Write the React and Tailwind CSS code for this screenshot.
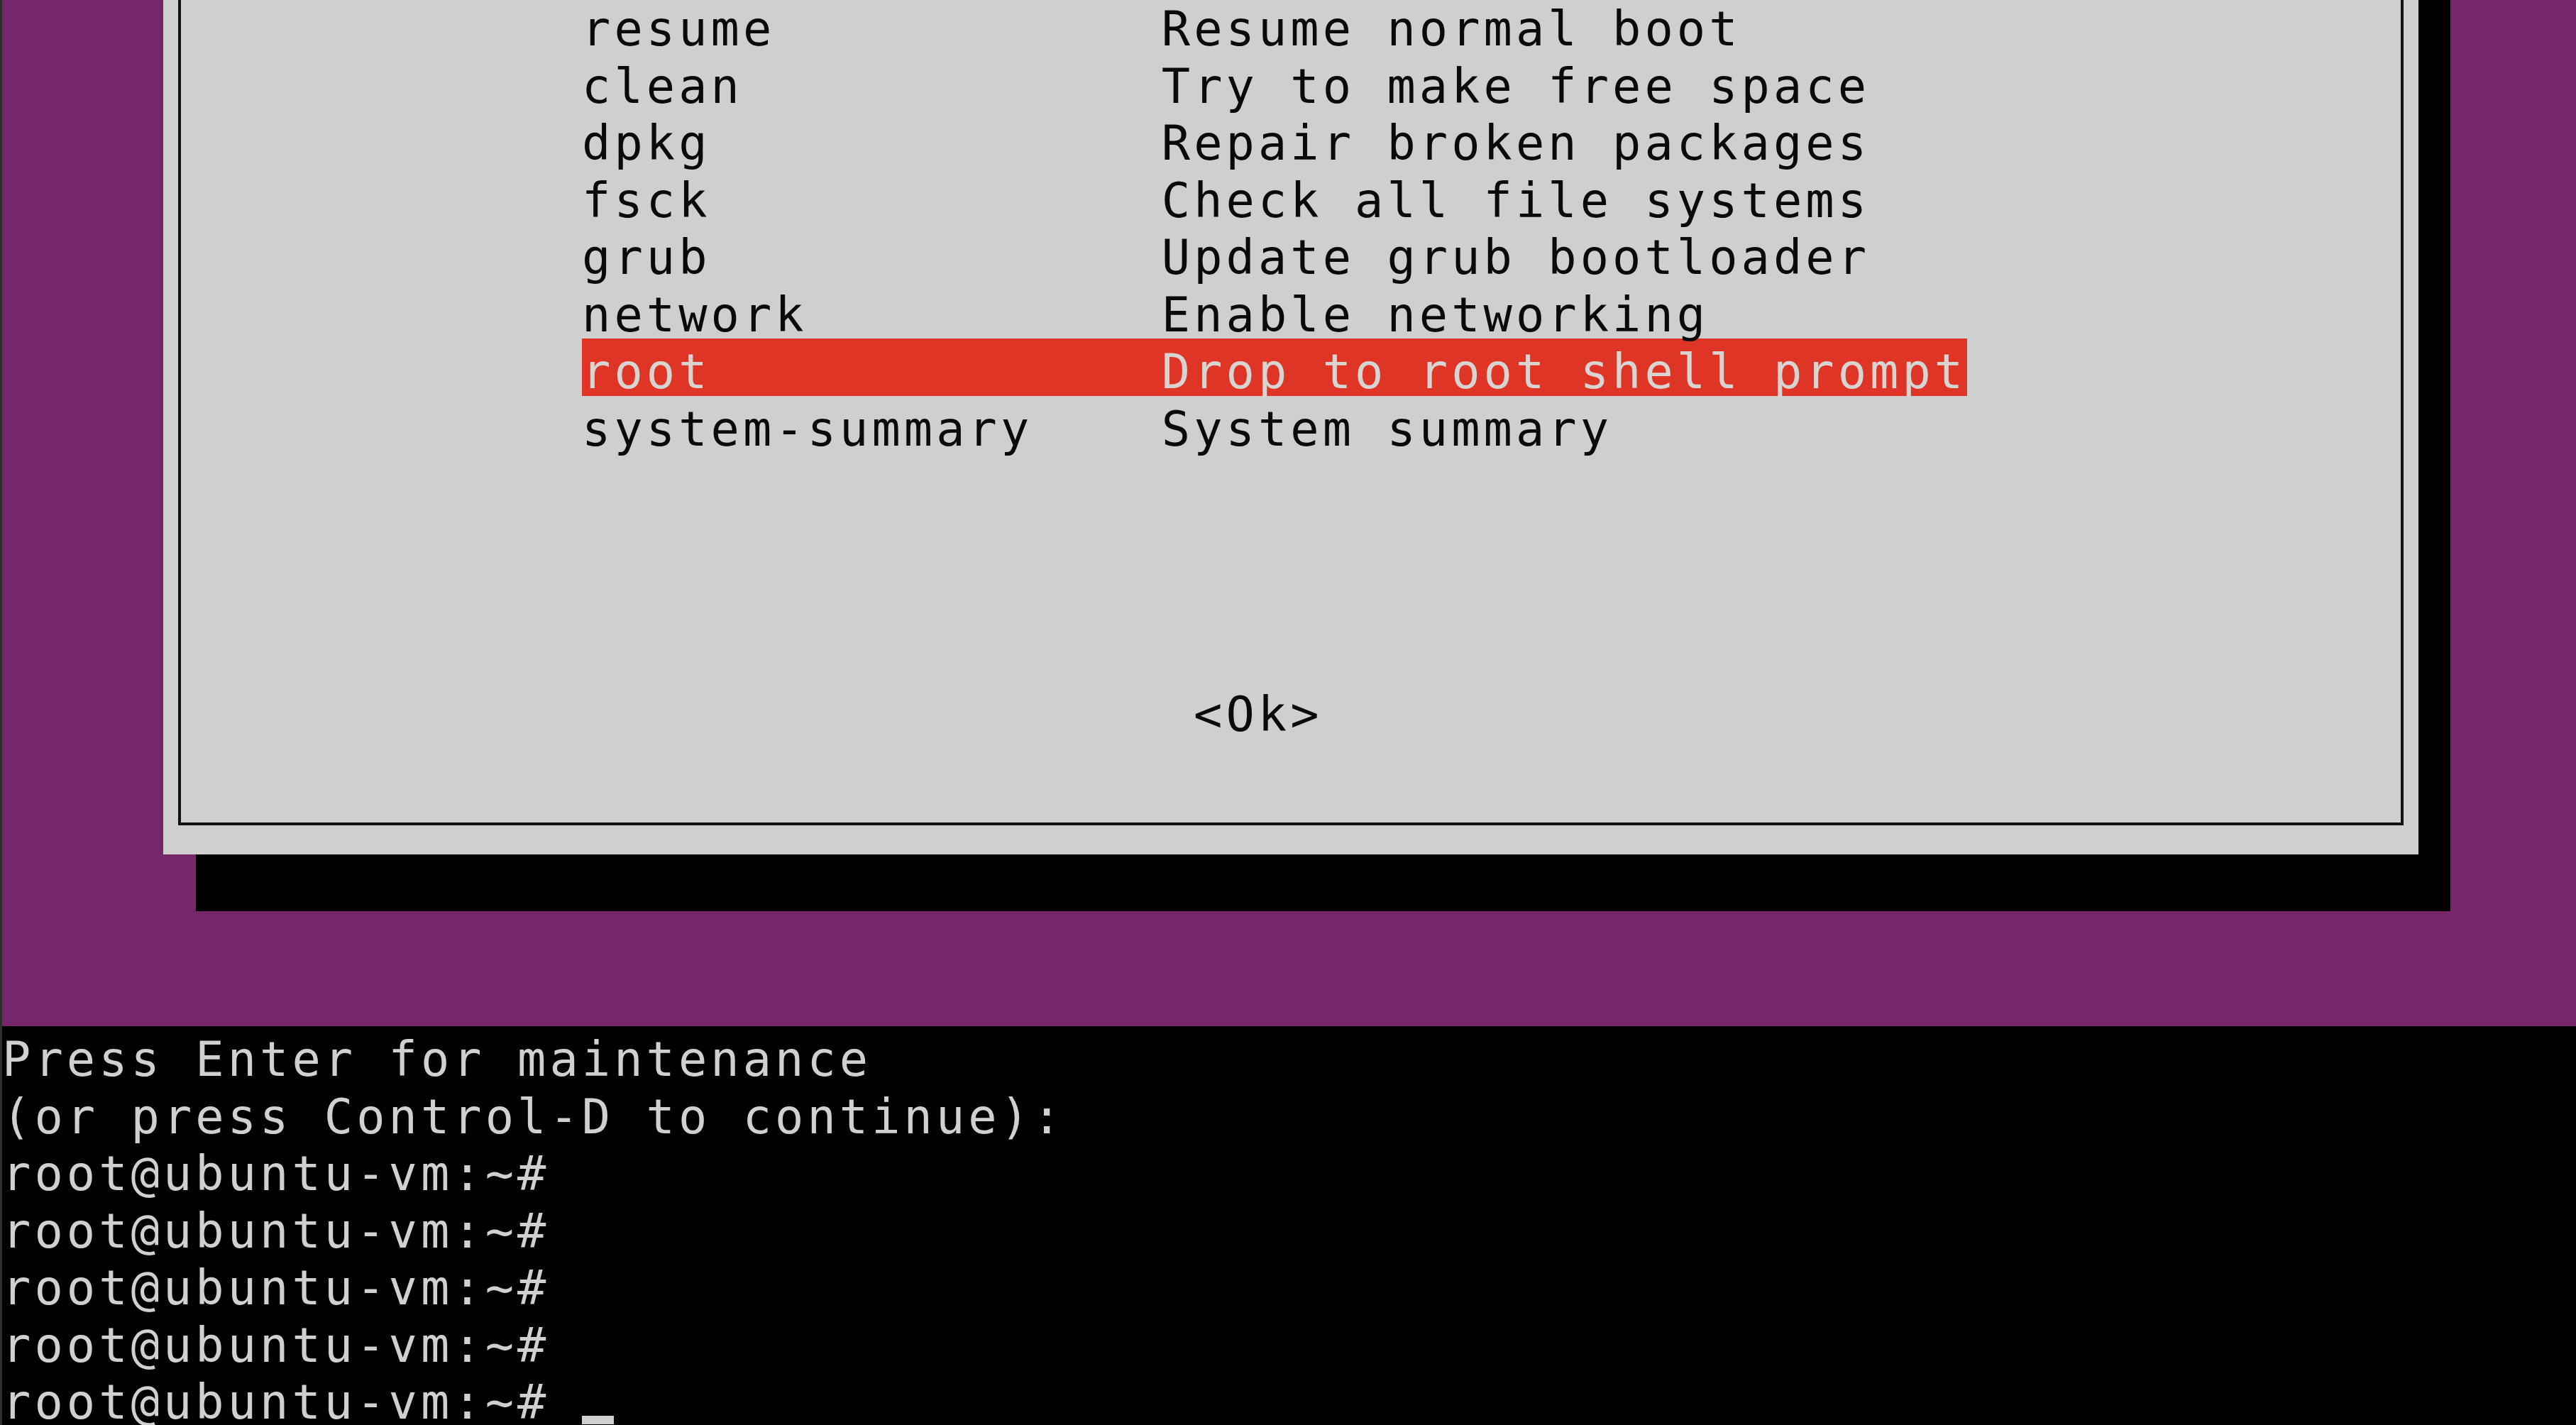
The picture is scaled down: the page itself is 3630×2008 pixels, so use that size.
import clsx from "clsx";

const items = [
  ["resume", "Resume normal boot"],
  ["clean", "Try to make free space"],
  ["dpkg", "Repair broken packages"],
  ["fsck", "Check all file systems"],
  ["grub", "Update grub bootloader"],
  ["network", "Enable networking"],
  ["root", "Drop to root shell prompt"],
  ["system-summary", "System summary"],
];

const consoleLines = [
  "Press Enter for maintenance",
  "(or press Control-D to continue):",
  "root@ubuntu-vm:~#",
  "root@ubuntu-vm:~#",
  "root@ubuntu-vm:~#",
  "root@ubuntu-vm:~#",
];

function MenuRow({ name, desc, selected }) {
  return (
    <div
      className={clsx(
        "flex h-[80.5px] w-[1952px] whitespace-nowrap pt-[15px] leading-[65.5px]",
        selected ? "bg-[#de3526] text-[#d8d4d2]" : "text-[#0a0a0a]"
      )}
    >
      <span className="w-[816.75px] shrink-0">{name}</span>
      <span>{desc}</span>
    </div>
  );
}

export default function App() {
  return (
    <div className="flex h-[2008px] w-[3630px] flex-col overflow-hidden border-l-[3px] border-[#2e2e2e] bg-black font-['DejaVu_Sans_Mono',monospace] text-[67px] tracking-[5.04px]">
      {/* dialog area */}
      <div className="h-[1446px] shrink-0 bg-[#76276c] pl-[227px]">
        <div className="flex">
          <div className="flex h-[1204px] w-[3178px] flex-col bg-[#cfcfcf] px-[21px] pb-[41px]">
            <div className="flex-1 border-x-4 border-b-4 border-[#111]">
              <div className="-mt-[6px] pl-[565px]">
                {items.map(([name, desc]) => (
                  <MenuRow key={name} name={name} desc={desc} selected={name === "root"} />
                ))}
                <div className="h-[322px]" />
                <div className="h-[80.5px] whitespace-nowrap pl-[862px] pt-[15px] leading-[65.5px] text-[#0a0a0a]">
                  &lt;Ok&gt;
                </div>
              </div>
            </div>
          </div>
          <div className="h-[1204px] w-[45px] bg-black" />
        </div>
        <div className="ml-[46px] h-[80px] w-[3177px] bg-black" />
      </div>

      {/* console */}
      <div className="flex-1 bg-black text-[#d0d0d0]">
        {consoleLines.map((line, i) => (
          <div key={i} className="h-[80.5px] whitespace-pre pt-[15px] leading-[65.5px]">
            {line}
          </div>
        ))}
        <div className="flex h-[80.5px] whitespace-pre pt-[15px] leading-[65.5px]">
          <span>{"root@ubuntu-vm:~# "}</span>
          <span className="mt-[51px] h-[12px] w-[45px] bg-[#d0d0d0]" />
        </div>
      </div>
    </div>
  );
}
